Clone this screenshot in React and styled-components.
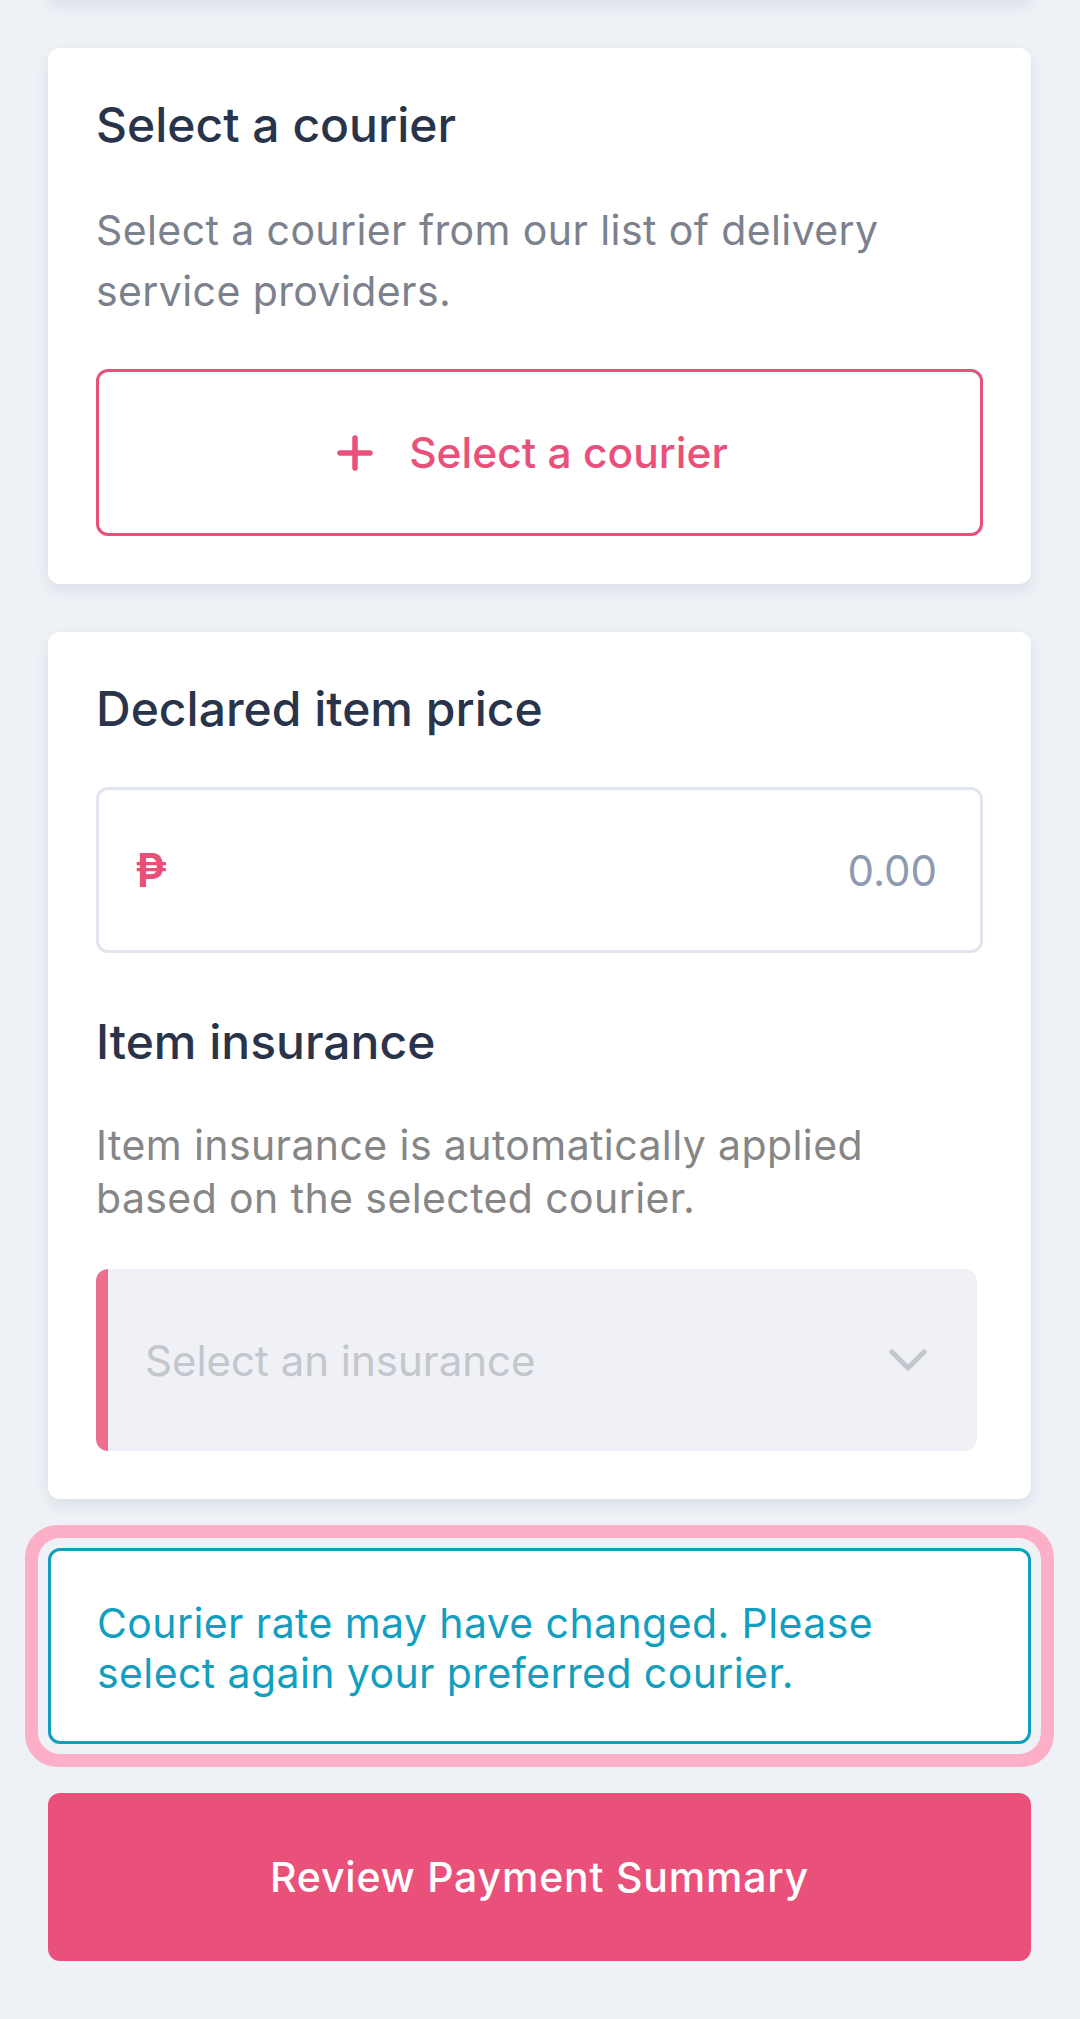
import React from "react";
import styled, { createGlobalStyle } from "styled-components";

const GlobalStyle = createGlobalStyle`
    html, body {
        margin: 0;
        padding: 0;
        background: #eef2f7;
        font-family: Inter, "Noto Sans", "Liberation Sans", sans-serif;
    }
    * {
        box-sizing: border-box;
    }
`;

const Page = styled.div`
    display: flex;
    flex-direction: column;
    gap: 48px;
    padding: 0 49px 57px 48px;
    overflow: hidden;
`;

const Card = styled.section`
    background: #ffffff;
    border-radius: 12px;
    padding: 48px;
    box-shadow: 0 6px 14px rgba(40, 55, 90, 0.1);
`;

const PrevCard = styled(Card)`
    height: 40px;
    margin-top: -40px;
    padding: 0;
`;

const Title = styled.h2`
    margin: 0 0 ${(p) => p.$gap || 47}px;
    font-size: 48px;
    line-height: 57px;
    font-weight: 500;
    color: #29344a;
`;

const Description = styled.p`
    margin: 0 0 ${(p) => p.$gap || 47}px;
    max-width: ${(p) => p.$max || "none"};
    font-size: 41px;
    letter-spacing: 0.4px;
    line-height: ${(p) => p.$lh || 61}px;
    color: ${(p) => p.$color || "#7b818d"};
`;

const OutlineButton = styled.button`
    width: 100%;
    height: 167px;
    display: flex;
    align-items: center;
    justify-content: center;
    gap: 36px;
    padding: 0 14px 0 0;
    background: #ffffff;
    border: 3px solid #e9507a;
    border-radius: 12px;
    color: #e9507a;
    font-family: inherit;
    font-size: 42.5px;
    font-weight: 500;
    cursor: pointer;
`;

const PriceField = styled.label`
    height: 166px;
    margin-bottom: 60px;
    display: flex;
    align-items: center;
    justify-content: space-between;
    padding: 0 43px 0 36px;
    border: 3px solid #e0e5ee;
    border-radius: 12px;
`;

const Peso = styled.span`
    font-size: 46px;
    font-weight: 600;
    color: #ea4f79;
`;

const Amount = styled.span`
    font-size: 42px;
    color: #8d9ab0;
`;

const SelectBox = styled.div`
    width: calc(100% - 6px);
    height: 182px;
    display: flex;
    align-items: center;
    justify-content: space-between;
    padding: 0 50px 0 37px;
    background: #eff1f6;
    border-left: 12px solid #ee6e8e;
    border-radius: 12px;
`;

const Placeholder = styled.span`
    font-size: 42px;
    color: #c3c6cc;
`;

const Alert = styled.div`
    margin-top: 1px;
    padding: 47px 46px 43px;
    background: #ffffff;
    border: 3px solid #119fbe;
    border-radius: 12px;
    box-shadow: 0 0 0 10px #eef2f7, 0 0 0 23px #fdafc7;
    color: #129fbf;
    font-size: 41px;
    letter-spacing: 0.4px;
    line-height: 50px;
`;

const PrimaryButton = styled.button`
    height: 168px;
    margin-top: 1px;
    border: none;
    border-radius: 12px;
    background: #e9517a;
    color: #ffffff;
    font-family: inherit;
    font-size: 41px;
    font-weight: 500;
    letter-spacing: 0.8px;
    cursor: pointer;
`;

function PlusIcon() {
    return (
        <svg width="36" height="36" viewBox="0 0 36 36" fill="none">
            <path d="M18 3v30M3 18h30" stroke="#e9507a" strokeWidth="5.5" strokeLinecap="round" />
        </svg>
    );
}

function Chevron() {
    return (
        <svg width="38" height="23" viewBox="0 0 38 23" fill="none">
            <path d="M3 3l16 16L35 3" stroke="#c3c6cc" strokeWidth="5" strokeLinecap="round" strokeLinejoin="round" />
        </svg>
    );
}

export default function App() {
    return (
        <>
            <GlobalStyle />
            <Page>
                <PrevCard />
                <Card>
                    <Title>Select a courier</Title>
                    <Description>
                        Select a courier from our list of delivery service providers.
                    </Description>
                    <OutlineButton>
                        <PlusIcon />
                        <span>Select a courier</span>
                    </OutlineButton>
                </Card>
                <Card>
                    <Title $gap={50}>Declared item price</Title>
                    <PriceField>
                        <Peso>₱</Peso>
                        <Amount>0.00</Amount>
                    </PriceField>
                    <Title $gap={49}>Item insurance</Title>
                    <Description $lh={53} $gap={44} $max="840px" $color="#868686">
                        Item insurance is automatically applied based on the selected courier.
                    </Description>
                    <SelectBox>
                        <Placeholder>Select an insurance</Placeholder>
                        <Chevron />
                    </SelectBox>
                </Card>
                <Alert>
                    Courier rate may have changed. Please select again your preferred courier.
                </Alert>
                <PrimaryButton>Review Payment Summary</PrimaryButton>
            </Page>
        </>
    );
}
